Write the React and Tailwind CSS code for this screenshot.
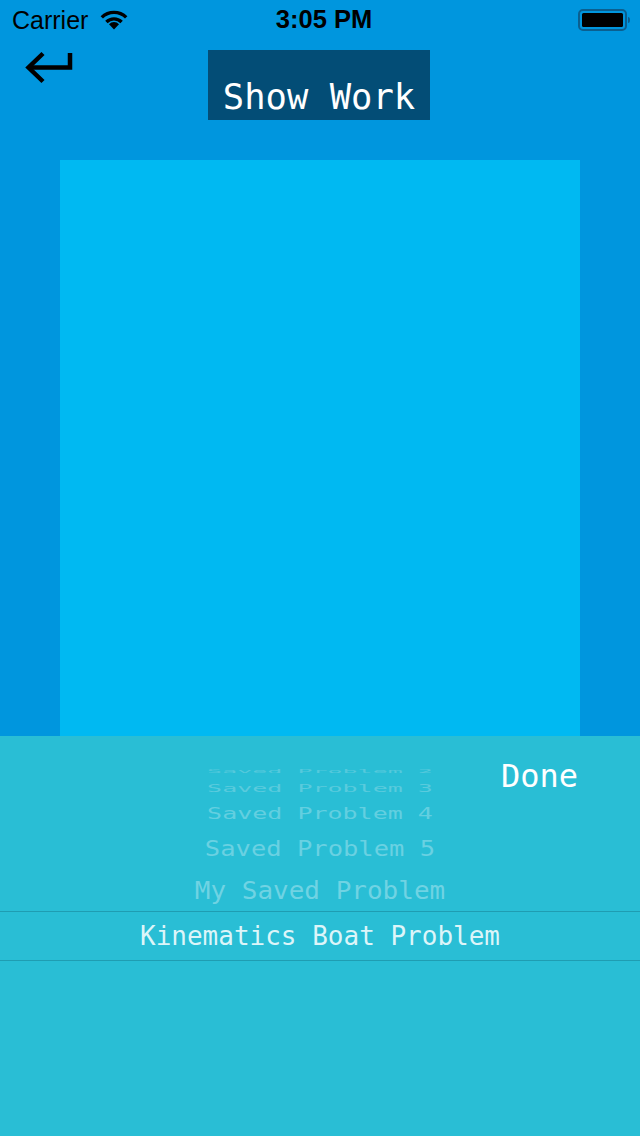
import React from "react";

const mono = { fontFamily: '"DejaVu Sans Mono", "Liberation Mono", monospace' };

const rows = [
  { label: "Saved Problem 2", h: "h-[14px]", scale: 0.22, color: "text-[#55c9dc]", size: "text-[25px]" },
  { label: "Saved Problem 3", h: "h-[20px]", scale: 0.4, color: "text-[#5acbdd]", size: "text-[25px]" },
  { label: "Saved Problem 4", h: "h-[31px]", scale: 0.62, color: "text-[#63cfe0]", size: "text-[25px]" },
  { label: "Saved Problem 5", h: "h-[39px]", scale: 0.82, color: "text-[#6ad1e2]", size: "text-[25.5px]" },
  { label: "My Saved Problem", h: "h-[43px]", scale: 0.96, color: "text-[#70d3e3]", size: "text-[26px]" },
];

const StatusBar = () => (
  <div className="h-10 flex items-center justify-between pl-[12px] pr-[10px] text-black" style={{ fontFamily: '"Liberation Sans", Arial, sans-serif' }}>
    <div className="flex items-center gap-[11px] w-[200px]">
      <span className="text-[25px] leading-none">Carrier</span>
      <svg width="30" height="20" viewBox="0 0 30 20" className="-mt-[1px]">
        <path d="M15 19.5 L10 14.2 A7 7 0 0 1 20 14.2 Z" fill="black" />
        <path d="M6.2 10.8 A12.5 12.5 0 0 1 23.8 10.8 L21.4 13.2 A9 9 0 0 0 8.6 13.2 Z" fill="black" />
        <path d="M1.6 6.2 A19 19 0 0 1 28.4 6.2 L26 8.6 A15.6 15.6 0 0 0 4 8.6 Z" fill="black" />
      </svg>
    </div>
    <span className="text-[25.5px] font-bold leading-none pl-[6px]">3:05 PM</span>
    <div className="w-[200px] flex justify-end">
      <svg width="52" height="22" viewBox="0 0 52 22">
        <rect x="1" y="1" width="47" height="20" rx="4" fill="none" stroke="#0b5f8f" strokeWidth="2" />
        <rect x="4" y="4" width="41" height="14" rx="1.5" fill="black" />
        <path d="M50 8 Q52 8 52 11 Q52 14 50 14 Z" fill="#0b5f8f" />
      </svg>
    </div>
  </div>
);

export default function App() {
  return (
    <div className="w-[640px] h-[1136px] bg-[#0096de] flex flex-col overflow-hidden">
      <StatusBar />
      <div className="h-20 flex items-start px-6 pt-[10px]">
        <button className="w-[50px]">
          <svg width="50" height="34" viewBox="0 0 50 34">
            <path d="M46 3 V17.5 H5" fill="none" stroke="black" strokeWidth="4.5" />
            <path d="M19 3.5 L4.5 17.5 L19 31.5" fill="none" stroke="black" strokeWidth="4.5" />
          </svg>
        </button>
        <div className="ml-[134px] w-[222px] h-[70px] bg-[#034d76] flex items-end justify-center">
          <span className="text-white text-[35.5px] leading-[46px]" style={mono}>Show Work</span>
        </div>
      </div>
      <div className="flex-1 px-[60px] pt-10">
        <div className="h-full bg-[#00b9f2]" />
      </div>
      <div className="relative h-[400px] bg-[#29bed5] shrink-0">
        <button className="absolute right-[62px] top-[20px] text-white text-[32px] leading-[40px]" style={mono}>
          Done
        </button>
        <div className="pt-[28px] flex flex-col" style={mono}>
          {rows.map((r) => (
            <div key={r.label} className={`${r.h} flex items-center justify-center overflow-hidden`}>
              <span
                className={`${r.color} ${r.size} leading-none whitespace-nowrap`}
                style={{ transform: `scaleY(${r.scale})` }}
              >
                {r.label}
              </span>
            </div>
          ))}
          <div className="h-[50px] border-y border-[#1f9db2] flex items-center justify-center">
            <span className="text-[#dcf5f9] text-[26px] leading-none">Kinematics Boat Problem</span>
          </div>
        </div>
      </div>
    </div>
  );
}
